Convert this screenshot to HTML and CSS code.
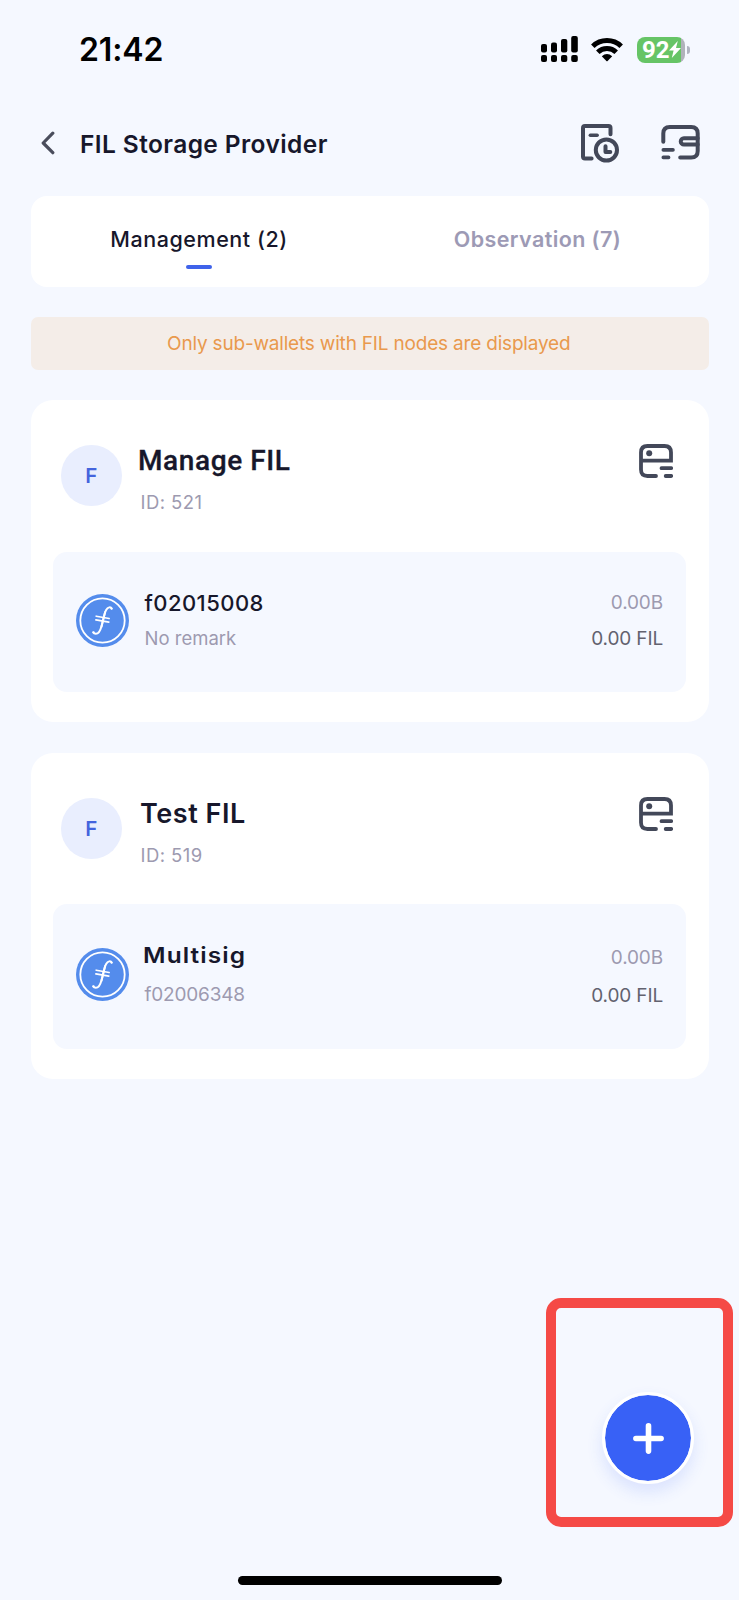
FILE: index.html
```html
<!DOCTYPE html>
<html lang="en">
<head>
<meta charset="utf-8">
<title>FIL Storage Provider</title>
<link rel="stylesheet" href="styles.css">
</head>
<body>
<svg class="defs" aria-hidden="true">
  <symbol id="server" viewBox="0 0 34 34">
    <g fill="none" stroke="#434859" stroke-width="3.8" stroke-linecap="round">
      <path d="M17 32H8.500Q2 32 2 25.500V8.500Q2 2 8.500 2H25.500Q32 2 32 8.500V16.700H2"/>
      <path d="M22.500 24.200H32.200M26.700 32H32.200"/>
    </g>
    <circle cx="10.200" cy="9.300" r="3" fill="#434859"/>
  </symbol>
  <symbol id="coin" viewBox="18 26 160 160">
    <circle cx="98" cy="106" r="80" fill="#548cec"/>
    <circle cx="98" cy="106" r="67" fill="none" stroke="#fff" stroke-width="5.500"/>
    <g fill="none" stroke="#fff" stroke-linecap="round">
      <path stroke-width="6" d="M126 70C123 64 114 65 109 74C102 87 100 107 95 123C91 138 86 146 78 146Q72 146 70 142"/>
      <path stroke-width="6" d="M106 80L95 125"/>
      <path stroke-width="5" d="M79 93L118 100M78 104L117 111"/>
    </g>
    <circle cx="125" cy="70" r="3.500" fill="#fff"/>
    <circle cx="71" cy="142" r="3.500" fill="#fff"/>
  </symbol>
</svg>

<div class="screen">
  <div class="status">
    <span class="time">21:42</span>
    <svg class="signal" width="38" height="27" viewBox="0 0 38 27">
      <rect x="0" y="8" width="6" height="8.500" rx="2"/><rect x="10" y="6.500" width="6" height="10" rx="2"/><rect x="20" y="3" width="6.300" height="13.500" rx="2"/><rect x="30.200" y="0" width="6.600" height="16.500" rx="2"/>
      <rect x="0" y="19" width="6" height="7" rx="2"/><rect x="10" y="19" width="6" height="7" rx="2"/><rect x="20" y="19" width="6.300" height="7" rx="2"/><rect x="30.200" y="19" width="6.600" height="7" rx="2"/>
    </svg>
    <svg class="wifi" width="32" height="25" viewBox="0 0 32 25">
      <g fill="none" stroke="#000" stroke-width="5">
        <path d="M1.800 9.200A20.500 20.500 0 0 1 30.200 9.200"/>
        <path d="M6.800 15.300A13.200 13.200 0 0 1 25.200 15.300"/>
      </g>
      <path d="M10.800 19.300Q16 14.800 21.200 19.300L16.600 24Q16 24.600 15.400 24Z"/>
    </svg>
    <div class="battery">
      <span class="level">92</span>
      <svg width="12" height="17" viewBox="0 0 12 17"><path fill="#fff" d="M8.800 0L0 9.600H4.600L2.800 17L12 7H7Z"/></svg>
    </div>
    <span class="nub"></span>
  </div>

  <header class="header">
    <svg class="back" width="14" height="24" viewBox="0 0 14 24"><path d="M11.800 2.200L2.200 12L11.800 21.700" fill="none" stroke="#4a4d5c" stroke-width="3.200" stroke-linecap="round" stroke-linejoin="round"/></svg>
    <h1 class="title">FIL Storage Provider</h1>
    <svg class="history" width="38" height="39" viewBox="0 0 38 39">
      <g fill="none" stroke="#434859" stroke-width="4" stroke-linecap="round" stroke-linejoin="round">
        <path d="M29.500 10.300V4Q29.500 2 27.500 2H4Q2 2 2 4V32.400Q2 34.400 4 34.400H10.600"/>
        <path stroke-width="3.400" d="M9.300 11.300H16.200"/>
        <circle cx="25.400" cy="26" r="10.600"/>
        <path d="M24.500 22.300V28H29.300"/>
      </g>
    </svg>
    <svg class="wallet" width="39" height="38" viewBox="0 0 39 38">
      <g fill="none" stroke="#434859" stroke-width="4" stroke-linecap="round" stroke-linejoin="round">
        <path d="M2.300 17.800V9.500Q2.300 3 8.800 3H30.200Q36.700 3 36.700 9.500V27.100Q36.700 33.600 30.200 33.600H19.200"/>
        <path d="M36.700 14.300H22.900a3.150 3.150 0 0 0 0 6.300H36.700"/>
        <path stroke-width="3.600" d="M2.300 25.900H12M2.300 33.400H7.600"/>
      </g>
    </svg>
  </header>

  <nav class="tabs">
    <div class="tab active">Management (2)</div>
    <div class="tab">Observation (7)</div>
  </nav>

  <div class="notice">Only sub-wallets with FIL nodes are displayed</div>

  <section class="card manage">
    <div class="owner">
      <span class="avatar">F</span>
      <div class="who">
        <h2 class="name">Manage FIL</h2>
        <p class="id">ID: 521</p>
      </div>
      <svg class="server"><use href="#server"/></svg>
    </div>
    <div class="node">
      <svg class="coin"><use href="#coin"/></svg>
      <div class="lines">
        <p class="node-name">f02015008</p>
        <p class="remark">No remark</p>
      </div>
      <div class="lines amounts">
        <p class="power">0.00B</p>
        <p class="balance">0.00 FIL</p>
      </div>
    </div>
  </section>

  <section class="card test">
    <div class="owner">
      <span class="avatar">F</span>
      <div class="who">
        <h2 class="name">Test FIL</h2>
        <p class="id">ID: 519</p>
      </div>
      <svg class="server"><use href="#server"/></svg>
    </div>
    <div class="node">
      <svg class="coin"><use href="#coin"/></svg>
      <div class="lines">
        <p class="node-name">Multisig</p>
        <p class="remark">f02006348</p>
      </div>
      <div class="lines amounts">
        <p class="power">0.00B</p>
        <p class="balance">0.00 FIL</p>
      </div>
    </div>
  </section>

  <div class="highlight">
    <div class="fab">
      <svg width="31" height="31" viewBox="0 0 31 31"><path d="M15.500 2.900V28.100M2.900 15.500H28.100" stroke="#fff" stroke-width="5.600" stroke-linecap="round"/></svg>
    </div>
  </div>
  <div class="home"></div>
</div>
</body>
</html>
```

FILE: styles.css
```css
* { box-sizing: border-box; }
body { margin: 0; background: #f5f8ff; font-family: Inter, "Liberation Sans", sans-serif; color: #17172b; }
h1, h2, p { margin: 0; }
svg { display: block; flex: none; }
.defs { position: absolute; width: 0; height: 0; }

.screen { position: relative; width: 739px; height: 1600px; overflow: hidden; padding: 0 30px 0 30.500px; display: flex; flex-direction: column; }

.status { height: 99px; display: flex; align-items: center; padding-left: 48.500px; }
.time { flex: 1; font-size: 32px; line-height: 40px; font-weight: 600; letter-spacing: -0.100px; color: #000; }
.signal { margin-right: 12px; }
.wifi { margin-right: 14px; }
.battery { width: 47.500px; height: 26px; border-radius: 8px; background: linear-gradient(to right, #66c466 44px, #b0b2ba 44px); display: flex; align-items: center; padding-left: 5px; }
.level { font: 700 24px/26px Roboto, sans-serif; letter-spacing: 0; color: #fff; width: 27px; }
.nub { width: 2.500px; height: 8px; margin: 0 19.500px 0 2.500px; border-radius: 0 3px 3px 0; background: #b0b3c0; }

.header { height: 88px; display: flex; align-items: center; }
.back { margin-left: 10px; margin-right: 25.500px; }
.title { flex: 1; font-size: 24.500px; line-height: 32px; font-weight: 600; letter-spacing: 0.400px; padding-top: 1px; }
.history { margin-right: 42px; }
.wallet { margin-right: 9.500px; }

.tabs { height: 91px; flex: none; margin-top: 8.500px; border-radius: 16px; background: #fff; display: flex; }
.tab { flex: 1; padding: 27px 3px 0 0; display: flex; flex-direction: column; align-items: center; font-size: 21.500px; line-height: 32px; font-weight: 600; letter-spacing: 0.400px; color: #9d9ab5; }
.tab.active { font-weight: 500; letter-spacing: 0.550px; color: #17172b; padding-right: 1.500px; }
.tab.active::after { content: ""; width: 26.500px; height: 4px; margin-top: 10.500px; border-radius: 2px; background: #3f63ea; }

.notice { height: 53px; flex: none; margin-top: 30.500px; padding-right: 2px; border-radius: 7px; background: #f4ede8; color: #e9994d; font-size: 19px; line-height: 53px; letter-spacing: -0.190px; text-align: center; }

.card { flex: none; border-radius: 22px; background: #fff; padding: 0 23px 0 22.500px; }
.manage { height: 322px; margin-top: 30px; }
.test { height: 326px; margin-top: 31px; }
.owner { height: 152px; padding: 45px 13px 0 8px; display: flex; align-items: flex-start; }
.avatar { width: 60.500px; height: 60.500px; border-radius: 50%; background: #e9eefe; color: #4464dd; font-size: 20.500px; line-height: 62.500px; font-weight: 600; text-align: center; }
.who { flex: 1; padding-left: 16.500px; }
.name { font: 500 28px/34px Roboto, sans-serif; letter-spacing: 0.600px; margin-top: -1.500px; -webkit-text-stroke: 0.300px currentColor; }
.id { font-size: 18.500px; line-height: 26px; letter-spacing: 0.440px; color: #9d9ab0; margin: 11px 0 0 2.500px; }
.server { width: 34px; height: 34px; margin-top: -1px; }
.test .owner { height: 151px; }
.test .name { font: 600 27px/34px Inter, sans-serif; letter-spacing: 0.540px; margin: -1.500px 0 0 2px; -webkit-text-stroke: 0; }
.test .server { margin-top: -1.500px; }

.node { height: 140px; border-radius: 14px; background: #f5f8ff; display: flex; align-items: flex-start; padding: 41.500px 23px 0; }
.coin { width: 53px; height: 53px; margin-right: 15.500px; }
.lines { flex: 1; }
.node-name { font-size: 22px; line-height: 30px; font-weight: 500; letter-spacing: 0.450px; margin-top: -5.500px; }
.remark { font-size: 18.500px; line-height: 26px; letter-spacing: 0; color: #9d9ab0; margin: 7px 0 0; }
.amounts { text-align: right; }
.power, .balance { font-size: 19px; line-height: 26px; letter-spacing: -0.140px; }
.power { color: #9d9ab0; margin-top: -4px; }
.balance { color: #62626f; margin-top: 10px; }
.test .node { height: 144.500px; padding-top: 44px; }
.test .node-name { letter-spacing: 1px; font-weight: 600; margin-top: -8px; margin-left: -1.500px; transform: scaleX(1.110); transform-origin: 0 50%; }
.test .remark { font-size: 19px; letter-spacing: -0.200px; margin-top: 12px; }
.test .power { margin-top: -3.500px; }
.test .balance { margin-top: 12px; }

.highlight { position: absolute; left: 546px; top: 1298px; width: 187px; height: 229px; border: 10px solid #f54a46; border-radius: 15px; }
.fab { position: absolute; left: 46px; top: 83.500px; width: 92px; height: 92px; border: 3.500px solid #fff; border-radius: 50%; background: #3861f6; background-clip: padding-box; box-shadow: 0 8px 16px rgba(56, 97, 246, 0.140); display: flex; align-items: center; justify-content: center; }
.fab svg { margin: 2px 0 0 1.500px; }
.home { position: absolute; left: 238px; top: 1576px; width: 264px; height: 9px; border-radius: 5px; background: #000; }
```
